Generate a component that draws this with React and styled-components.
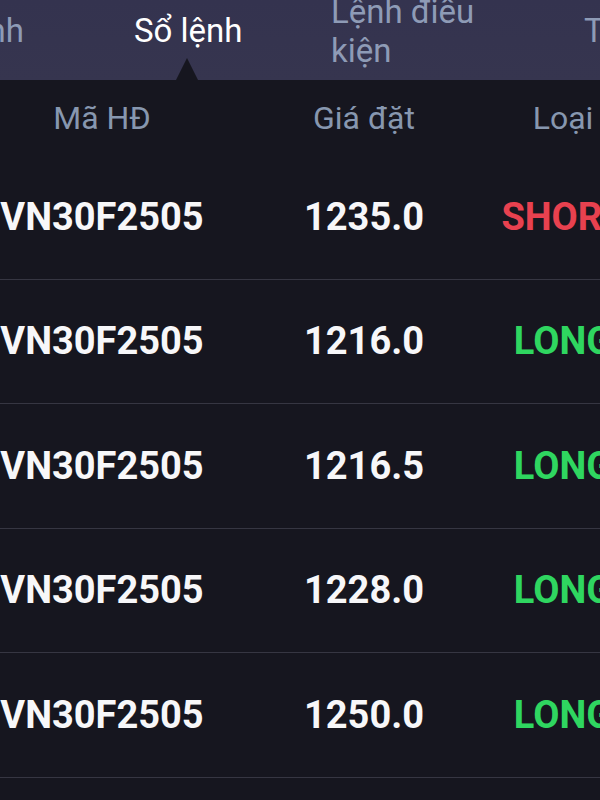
import React from "react";
import styled, { createGlobalStyle } from "styled-components";

const Global = createGlobalStyle`
  html, body { margin: 0; padding: 0; background: #16161f; }
  body { font-family: Roboto, "Noto Sans", sans-serif; overflow: hidden; }
`;

const Screen = styled.div`
  width: 600px;
  height: 800px;
  background: #16161f;
  overflow: hidden;
`;

const TabBar = styled.div`
  height: 80px;
  box-sizing: border-box;
  padding-bottom: 19px;
  background: linear-gradient(180deg, #34334f 0%, #36354f 100%);
  display: grid;
  grid-template-columns: 134px 197px 253px 1fr;
  grid-template-rows: 61px;
  align-items: center;
  overflow: hidden;
`;

const Tab = styled.div`
  display: flex;
  align-self: center;
  justify-content: ${(p) => (p.$end ? "flex-end" : "flex-start")};
  padding-right: ${(p) => (p.$end ? "110px" : "0")};
  font-size: 33px;
  line-height: 39px;
  font-weight: 400;
  color: ${(p) => (p.$active ? "#ffffff" : "#8e9bb6")};
  white-space: ${(p) => (p.$wrap ? "normal" : "nowrap")};
  max-width: ${(p) => (p.$wrap ? "160px" : "none")};
`;

const TabLabel = styled.span`
  position: relative;
  display: inline-block;
`;

const Pointer = styled.span`
  position: absolute;
  left: 42px;
  bottom: -30px;
  width: 0;
  height: 0;
  border-left: 11px solid transparent;
  border-right: 11px solid transparent;
  border-bottom: 22px solid #16161f;
`;

const Table = styled.div`
  display: flex;
  flex-direction: column;
`;

const Grid = styled.div`
  display: grid;
  grid-template-columns: 204px 320px 78px;
  align-items: center;
  box-sizing: border-box;
`;

const HeaderRow = styled(Grid)`
  height: 75px;
`;

const Row = styled(Grid)`
  height: 124.5px;
  border-bottom: 1px solid #363642;
`;

const Cell = styled.div`
  display: flex;
  justify-content: center;
  white-space: nowrap;
`;

const HeadText = styled.span`
  font-size: 32px;
  font-weight: 400;
  color: #8797af;
`;

const Value = styled.span`
  font-size: 38px;
  font-weight: 700;
  color: ${(p) => p.$color || "#f7f7f9"};
`;

const orders = [
  { code: "VN30F2505", price: "1235.0", side: "SHORT" },
  { code: "VN30F2505", price: "1216.0", side: "LONG" },
  { code: "VN30F2505", price: "1216.5", side: "LONG" },
  { code: "VN30F2505", price: "1228.0", side: "LONG" },
  { code: "VN30F2505", price: "1250.0", side: "LONG" },
];

export default function App() {
  return (
    <Screen>
      <Global />
      <TabBar>
        <Tab $end>Đặt lệnh</Tab>
        <Tab $active>
          <TabLabel>
            Sổ lệnh
            <Pointer />
          </TabLabel>
        </Tab>
        <Tab $wrap>Lệnh điều kiện</Tab>
        <Tab>Tài sản</Tab>
      </TabBar>
      <Table>
        <HeaderRow>
          <Cell><HeadText>Mã HĐ</HeadText></Cell>
          <Cell><HeadText>Giá đặt</HeadText></Cell>
          <Cell><HeadText>Loại</HeadText></Cell>
        </HeaderRow>
        {orders.map((o, i) => (
          <Row key={i}>
            <Cell><Value>{o.code}</Value></Cell>
            <Cell><Value>{o.price}</Value></Cell>
            <Cell>
              <Value $color={o.side === "SHORT" ? "#e8414f" : "#2fd660"}>{o.side}</Value>
            </Cell>
          </Row>
        ))}
      </Table>
    </Screen>
  );
}
